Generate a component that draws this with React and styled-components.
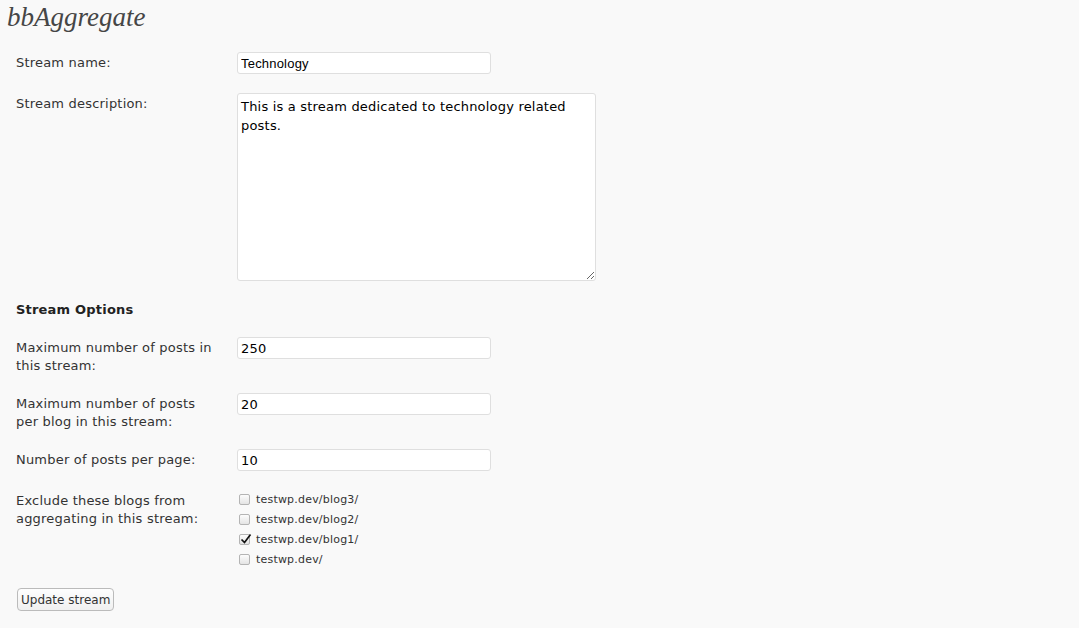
import React from "react";
import styled, { createGlobalStyle } from "styled-components";

const GlobalStyle = createGlobalStyle`
  html, body {
    margin: 0;
    padding: 0;
    background: #f9f9f9;
  }
  body {
    font-family: "DejaVu Sans", Verdana, sans-serif;
    font-size: 13px;
    letter-spacing: 0.2px;
    color: #333;
  }
`;

const blogs = [
  { url: "testwp.dev/blog3/", checked: false },
  { url: "testwp.dev/blog2/", checked: false },
  { url: "testwp.dev/blog1/", checked: true },
  { url: "testwp.dev/", checked: false },
];

function App() {
  return (
    <Page>
      <GlobalStyle />
      <Title>bbAggregate</Title>
      <Form onSubmit={(e) => e.preventDefault()}>
        <Row>
          <Label>Stream name:</Label>
          <TextInput defaultValue="Technology" />
        </Row>
        <Row>
          <Label>Stream description:</Label>
          <Description defaultValue="This is a stream dedicated to technology related posts." />
        </Row>
        <Heading>Stream Options</Heading>
        <Row>
          <Label>Maximum number of posts in this stream:</Label>
          <NumberInput defaultValue="250" />
        </Row>
        <Row>
          <Label>Maximum number of posts per blog in this stream:</Label>
          <NumberInput defaultValue="20" />
        </Row>
        <Row>
          <Label>Number of posts per page:</Label>
          <NumberInput defaultValue="10" />
        </Row>
        <Row>
          <Label>Exclude these blogs from aggregating in this stream:</Label>
          <BlogList>
            {blogs.map((b) => (
              <BlogItem key={b.url}>
                <Box>
                  {b.checked && (
                    <svg width="12" height="12" viewBox="0 0 12 12">
                      <path d="M1.5 6.5 L4.5 9.5 L10.5 1.5" fill="none" stroke="#111" strokeWidth="1.7" />
                    </svg>
                  )}
                </Box>
                {b.url}
              </BlogItem>
            ))}
          </BlogList>
        </Row>
        <Footer>
          <Button type="submit">Update stream</Button>
        </Footer>
      </Form>
    </Page>
  );
}

export default App;

const Page = styled.div`
  width: 1079px;
  min-height: 628px;
  box-sizing: border-box;
`;

const Title = styled.h2`
  margin: 0;
  padding-left: 7px;
  font-family: "Liberation Serif", "Times New Roman", serif;
  font-style: italic;
  font-weight: normal;
  font-size: 27px;
  letter-spacing: 0;
  line-height: 34px;
  color: #464646;
`;

const Form = styled.form`
  display: flex;
  flex-direction: column;
  gap: 19px;
  padding: 18px 0 0 16px;
`;

const Row = styled.div`
  display: grid;
  grid-template-columns: 200px 1fr;
  column-gap: 21px;
  align-items: start;
`;

const Label = styled.div`
  padding-top: 2px;
  margin-bottom: -1px;
  line-height: 18px;
  color: #333;
`;

const Heading = styled.h3`
  margin: 0;
  padding-top: 1px;
  font-size: 13px;
  line-height: 17px;
  font-weight: bold;
  color: #222;
`;

const fieldBase = `
  box-sizing: border-box;
  background: #fff;
  border: 1px solid #dfdfdf;
  border-radius: 3px;
  color: #333;
  outline: none;
  margin: 0;
  letter-spacing: 0.2px;
`;

const TextInput = styled.input`
  ${fieldBase}
  width: 254px;
  height: 22px;
  padding: 2px 3px;
  font-family: "Liberation Sans", Arial, sans-serif;
  font-size: 13px;
  color: #000;
`;

const NumberInput = styled(TextInput)`
  font-family: "DejaVu Sans", Verdana, sans-serif;
`;

const Description = styled.textarea`
  ${fieldBase}
  width: 359px;
  height: 188px;
  padding: 3px 3px;
  font-family: "DejaVu Sans", Verdana, sans-serif;
  font-size: 13px;
  line-height: 19px;
  color: #000;
  display: block;
`;

const BlogList = styled.div`
  display: flex;
  flex-direction: column;
  margin-top: -1px;
`;

const BlogItem = styled.label`
  display: flex;
  align-items: center;
  gap: 6px;
  height: 20px;
  padding-left: 2px;
  font-size: 11px;
  color: #333;
`;

const Box = styled.span`
  position: relative;
  box-sizing: border-box;
  width: 11px;
  height: 11px;
  border: 1px solid #b4b4b4;
  border-radius: 2px;
  background: linear-gradient(#fcfcfc, #e4e4e4);
  flex: none;

  svg {
    position: absolute;
    left: 0;
    top: -2px;
  }
`;

const Footer = styled.div`
  padding-left: 1px;
`;

const Button = styled.button`
  height: 23px;
  padding: 0 3px;
  font-family: "DejaVu Sans", Verdana, sans-serif;
  font-size: 12px;
  letter-spacing: 0;
  color: #333;
  background: linear-gradient(#fefefe, #f0f0f0);
  border: 1px solid #bbb;
  border-radius: 4px;
  cursor: pointer;
`;
